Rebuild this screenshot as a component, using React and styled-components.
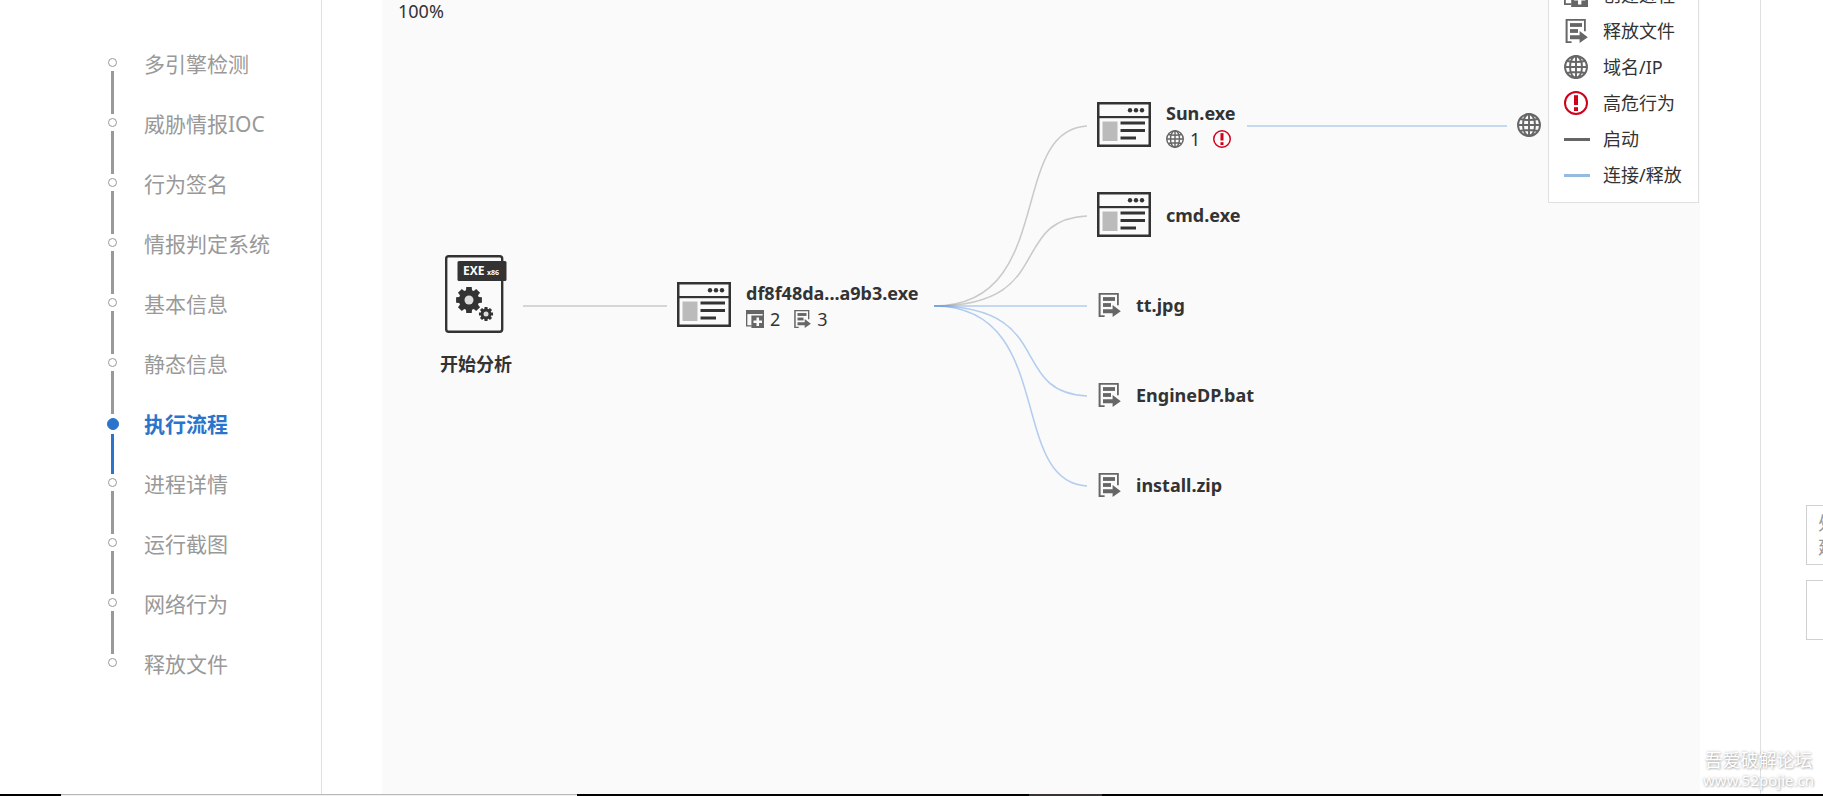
import React from "react";
import styled, { createGlobalStyle } from "styled-components";

const GlobalStyle = createGlobalStyle`
  * {
    box-sizing: border-box;
  }
  body {
    margin: 0;
    background: #fff;
    color: #333;
    font-family: "Noto Sans", "Noto Sans CJK SC", sans-serif;
    font-size: 18px;
    line-height: 24px;
  }
`;

const Page = styled.div`
  display: flex;
  flex-direction: column;
  height: 100vh;
  overflow: hidden;
`;

const Body = styled.div`
  display: flex;
  flex: 1;
  min-height: 0;
`;

/* left navigation */

const Sidebar = styled.nav`
  flex: none;
  width: 322px;
  padding: 58px 0 0 107px;
  border-right: 1px solid #e0e0e0;
`;

const NavList = styled.ul`
  margin: 0;
  padding: 0;
  list-style: none;
`;

const NavItem = styled.li`
  display: flex;
  height: 60px;
`;

const Track = styled.div`
  display: flex;
  flex-direction: column;
  align-items: center;
  width: 11px;
`;

const Dot = styled.span`
  flex: none;
  width: ${(props) => (props.$active ? "12px" : "9px")};
  height: ${(props) => (props.$active ? "12px" : "9px")};
  border: 1px solid ${(props) => (props.$active ? "#2a75cb" : "#999")};
  border-radius: 50%;
  background: ${(props) => (props.$active ? "#2a75cb" : "#fff")};
`;

const Stem = styled.span`
  flex: 1;
  width: 3px;
  margin: 4px 0;
  background: ${(props) => (props.$active ? "#2a75cb" : "#999")};
`;

const NavLink = styled.a`
  align-self: flex-start;
  margin: -8px 0 0 26px;
  color: ${(props) => (props.$active ? "#2a75cb" : "#999")};
  font-size: 21px;
  font-weight: ${(props) => (props.$active ? 700 : 400)};
  line-height: 28px;
  text-decoration: none;
`;

/* flow chart */

const Main = styled.main`
  display: flex;
  flex: 1;
  min-width: 0;
  padding: 0 60px;
`;

const Canvas = styled.section`
  position: relative;
  flex: 1;
  min-width: 0;
  overflow: hidden;
  background: #fafafa;
`;

const Zoom = styled.div`
  padding: 0 16px;
  line-height: 22px;
`;

const Edges = styled.svg`
  position: absolute;
  top: 0;
  left: 0;
  width: 100%;
  height: 100%;
  fill: none;
`;

const Node = styled.div`
  position: absolute;
  left: ${(props) => props.$x}px;
  top: ${(props) => props.$y}px;
  display: flex;
  align-items: center;
  gap: 15px;
  height: 54px;
  transform: translateY(-50%);
  white-space: nowrap;
`;

const NodeInfo = styled.div`
  padding-top: 2px;
`;

const StartNode = styled.div`
  position: absolute;
  left: 58px;
  top: 255px;
  display: flex;
  flex-direction: column;
  align-items: center;
  gap: 18px;
`;

const Name = styled.div`
  font-weight: 700;
  line-height: 26px;
`;

const Counts = styled.div`
  display: flex;
  align-items: center;
  gap: 13px;
  line-height: 26px;
`;

const Count = styled.span`
  display: flex;
  align-items: center;
  gap: 6px;
`;

const Legend = styled.ul`
  position: absolute;
  top: -32px;
  right: 1px;
  width: 151px;
  margin: 0;
  padding: 8px 0 9px 15px;
  border: 1px solid #e0e0e0;
  background: #fff;
  list-style: none;
`;

const LegendItem = styled.li`
  display: grid;
  grid-template-columns: 39px 1fr;
  align-items: center;
  height: 36px;
`;

const LegendLine = styled.span`
  width: 26px;
  height: 3px;
  background: ${(props) => props.$color};
`;

/* right rail */

const Rail = styled.aside`
  display: flex;
  flex: none;
  flex-direction: column;
  gap: 15px;
  width: 63px;
  padding: 505px 0 0 45px;
  overflow: hidden;
  border-left: 1px solid #e0e0e0;
`;

const RailButton = styled.button`
  flex: none;
  width: 60px;
  height: 60px;
  padding: 0 10px;
  border: 1px solid #d0d0d0;
  background: #fff;
  color: #999;
  font: inherit;
  line-height: 24px;
`;

const Watermark = styled.div`
  position: absolute;
  right: 9px;
  bottom: 6px;
  color: #fff;
  font-size: 18px;
  line-height: 20px;
  text-align: center;
  text-shadow: 0 0 3px rgba(0, 0, 0, 0.3), 1px 1px 2px rgba(0, 0, 0, 0.2);
`;

const Site = styled.div`
  font-size: 15px;
`;

const BottomEdge = styled.footer`
  display: flex;
  flex: none;
  height: 2px;
  padding-left: 61px;
  background: #000;
`;

const BottomGap = styled.div`
  width: 516px;
  border-top: 1px solid #b8b8b8;
  background: #f0f0f0;
`;

const BottomMark = styled.div`
  width: 73px;
  margin-left: 452px;
  background: #383436;
`;

const WindowIcon = () => (
  <svg width="54" height="46" viewBox="0 0 54 46" fill="#333">
    <rect x="1.25" y="1.25" width="51.5" height="42.5" fill="#fafafa" stroke="#333" strokeWidth="2.5" />
    <rect x="1" y="14" width="52" height="2.2" />
    <circle cx="33" cy="8.2" r="2.2" />
    <circle cx="39" cy="8.2" r="2.2" />
    <circle cx="45" cy="8.2" r="2.2" />
    <rect x="5.5" y="19.5" width="15" height="19.5" fill="#bbb" />
    <rect x="23.5" y="19.5" width="24.5" height="3" />
    <rect x="23.5" y="27" width="24.5" height="3" />
    <rect x="23.5" y="34.5" width="15.5" height="3" />
  </svg>
);

const FileIcon = ({ size = 24 }) => (
  <svg width={size} height={size} viewBox="0 0 24 24" fill="#666">
    <path d="M1.6 0H21.8V12.2H20V1.8H3.6V22.2H7.6V24H1.6Z" />
    <rect x="6" y="4.1" width="12" height="3.8" />
    <rect x="6" y="10.1" width="8" height="3.8" />
    <path d="M6 16.2H15.6V12L23.8 18.2L15.6 24V20.2H6Z" />
  </svg>
);

const CreateIcon = ({ size = 24 }) => (
  <svg width={size} height={size} viewBox="0 0 24 24" fill="#666">
    <path d="M0 0H24V5.4H0Z" />
    <path d="M0 5H1.8V20.2H7.5V22H0Z" />
    <path d="M22.2 5H24V8H22.2Z" />
    <path fillRule="evenodd" d="M7.2 7.2H24V24H7.2ZM14 10V14H10V17.4H14V21.4H17.4V17.4H21.4V14H17.4V10Z" />
  </svg>
);

const GlobeIcon = ({ size = 24 }) => (
  <svg width={size} height={size} viewBox="0 0 24 24" fill="none" stroke="#666" strokeWidth="1.9">
    <circle cx="12" cy="12" r="11" />
    <ellipse cx="12" cy="12" rx="6" ry="11" />
    <path d="M12 1V23M1 12H23M3 6Q12 8 21 6M3 18Q12 16 21 18" />
  </svg>
);

const AlertIcon = ({ size = 24 }) => (
  <svg width={size} height={size} viewBox="0 0 24 24" fill="#d0021b">
    <circle cx="12" cy="12" r="11" fill="none" stroke="#d0021b" strokeWidth="2" />
    <rect x="10" y="4.2" width="4" height="9.8" />
    <rect x="10" y="16.2" width="4" height="3.8" />
  </svg>
);

// eight-toothed wheel around (cx, cy)
const gearPath = (cx, cy, outer, inner) => {
  const points = [];
  for (let i = 0; i < 8; i++) {
    const a = (i * Math.PI) / 4;
    [[-0.3, inner], [-0.21, outer], [0.21, outer], [0.3, inner]].forEach(([d, r]) => {
      points.push(`${(cx + r * Math.cos(a + d)).toFixed(2)} ${(cy + r * Math.sin(a + d)).toFixed(2)}`);
    });
  }
  return `M${points.join("L")}Z`;
};

const ExeIcon = () => (
  <svg width="62" height="78" viewBox="0 0 62 78" fill="#333">
    <rect x="1.2" y="1.2" width="56" height="75.6" rx="2.5" fill="#fafafa" stroke="#333" strokeWidth="2.4" />
    <rect x="12.5" y="6" width="49" height="20" rx="1.5" />
    <text x="18" y="20" fill="#fff" fontFamily="Open Sans" fontSize="12" fontWeight="700">EXE</text>
    <text x="42" y="20" fill="#fff" fontFamily="Open Sans" fontSize="7" fontWeight="700">x86</text>
    <path d={gearPath(24, 45, 13.2, 10.2)} />
    <circle cx="24" cy="45" r="4.5" fill="#ddd" />
    <path d={gearPath(41, 59, 7.2, 5.4)} />
    <circle cx="41" cy="59" r="2.5" fill="#ddd" />
  </svg>
);

const navItems = [
  "多引擎检测",
  "威胁情报IOC",
  "行为签名",
  "情报判定系统",
  "基本信息",
  "静态信息",
  "执行流程",
  "进程详情",
  "运行截图",
  "网络行为",
  "释放文件",
];
const activeItem = "执行流程";

const files = [
  { name: "tt.jpg", y: 305 },
  { name: "EngineDP.bat", y: 395 },
  { name: "install.zip", y: 485 },
];

const START = "#999";
const RELEASE = "#6c9fe4";

const branches = [
  { y: 126, color: START },
  { y: 216, color: START },
  { y: 306, color: RELEASE },
  { y: 396, color: RELEASE },
  { y: 486, color: RELEASE },
];

const branchPath = (y) => {
  const lead = y + Math.sign(306 - y) * 4;
  return `M552 306C675 306 625 ${lead} 705 ${y}`;
};

const FlowChart = () => (
  <Canvas>
    <Zoom>100%</Zoom>
    <Edges strokeWidth="1.5" strokeOpacity="0.5">
      <path d="M141 306H285" stroke={START} />
      {branches.map((b) => (
        <path key={b.y} d={branchPath(b.y)} stroke={b.color} />
      ))}
      <path d="M865 126H1125" stroke={RELEASE} />
    </Edges>
    <StartNode>
      <ExeIcon />
      <Name>开始分析</Name>
    </StartNode>
    <Node $x={295} $y={305}>
      <WindowIcon />
      <NodeInfo>
        <Name>df8f48da...a9b3.exe</Name>
        <Counts>
          <Count><CreateIcon size={18} />2</Count>
          <Count><FileIcon size={18} />3</Count>
        </Counts>
      </NodeInfo>
    </Node>
    <Node $x={715} $y={125}>
      <WindowIcon />
      <NodeInfo>
        <Name>Sun.exe</Name>
        <Counts>
          <Count><GlobeIcon size={18} />1</Count>
          <AlertIcon size={18} />
        </Counts>
      </NodeInfo>
    </Node>
    <Node $x={715} $y={215}>
      <WindowIcon />
      <Name>cmd.exe</Name>
    </Node>
    {files.map((file) => (
      <Node key={file.name} $x={715} $y={file.y}>
        <FileIcon />
        <Name>{file.name}</Name>
      </Node>
    ))}
    <Node $x={1135} $y={125}>
      <GlobeIcon />
    </Node>
    <Legend>
      <LegendItem><CreateIcon />创建进程</LegendItem>
      <LegendItem><FileIcon />释放文件</LegendItem>
      <LegendItem><GlobeIcon />域名/IP</LegendItem>
      <LegendItem><AlertIcon />高危行为</LegendItem>
      <LegendItem><LegendLine $color="#666" />启动</LegendItem>
      <LegendItem><LegendLine $color="#94bbe0" />连接/释放</LegendItem>
    </Legend>
  </Canvas>
);

const App = () => {
  return (
    <Page>
      <GlobalStyle />
      <Body>
        <Sidebar>
          <NavList>
            {navItems.map((item, i) => {
              const active = item === activeItem;
              return (
                <NavItem key={item}>
                  <Track>
                    <Dot $active={active} />
                    {i < navItems.length - 1 && <Stem $active={active} />}
                  </Track>
                  <NavLink href={`#section-${i}`} $active={active}>{item}</NavLink>
                </NavItem>
              );
            })}
          </NavList>
        </Sidebar>
        <Main>
          <FlowChart />
        </Main>
        <Rail>
          <RailButton>处置建议</RailButton>
          <RailButton aria-label="more" />
        </Rail>
      </Body>
      <BottomEdge>
        <BottomGap />
        <BottomMark />
      </BottomEdge>
      <Watermark>
        吾爱破解论坛
        <Site>www.52pojie.cn</Site>
      </Watermark>
    </Page>
  );
};

export default App;
